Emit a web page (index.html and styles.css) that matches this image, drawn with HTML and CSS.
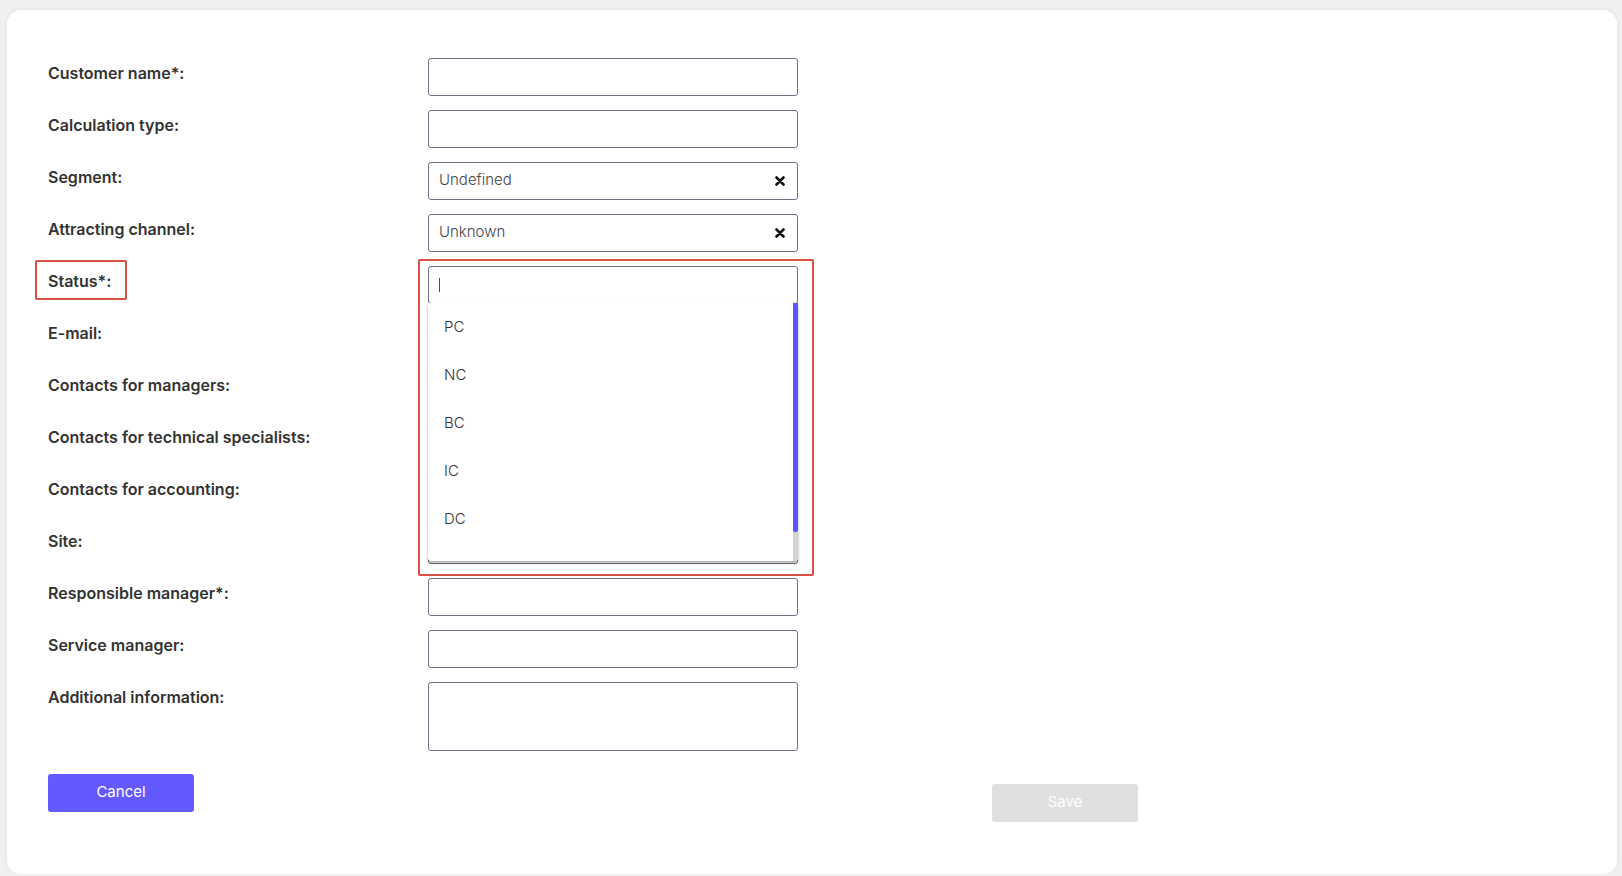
FILE: index.html
```html
<!DOCTYPE html>
<html lang="en">
<head>
    <meta charset="UTF-8">
    <meta name="viewport" content="width=device-width, initial-scale=1.0">
    <title>Customer card</title>
    <link rel="stylesheet" href="styles.css">
</head>
<body>

    <div class="card">
        <form class="customer-form">
            <label class="field-label">Customer name*:</label>
            <div class="input"></div>

            <label class="field-label">Calculation type:</label>
            <div class="input"></div>

            <label class="field-label">Segment:</label>
            <div class="input select">
                <span class="value">Undefined</span>
                <span class="clear">
                    <svg width="10" height="10" viewBox="0 0 10 10"><path d="M1.5 1.5 L8.5 8.5 M8.5 1.5 L1.5 8.5" stroke="#111" stroke-width="2.6" stroke-linecap="round"/></svg>
                </span>
            </div>

            <label class="field-label">Attracting channel:</label>
            <div class="input select">
                <span class="value">Unknown</span>
                <span class="clear">
                    <svg width="10" height="10" viewBox="0 0 10 10"><path d="M1.5 1.5 L8.5 8.5 M8.5 1.5 L1.5 8.5" stroke="#111" stroke-width="2.6" stroke-linecap="round"/></svg>
                </span>
            </div>

            <label class="field-label marked"><span>Status*:</span></label>
            <div class="status-field">
                <div class="input select open">
                    <span class="caret"></span>
                </div>
                <div class="dropdown">
                    <ul class="options">
                        <li>PC</li>
                        <li>NC</li>
                        <li>BC</li>
                        <li>IC</li>
                        <li>DC</li>
                    </ul>
                    <div class="scroll-track">
                        <div class="scroll-thumb"></div>
                    </div>
                </div>
                <div class="mark-box"></div>
            </div>

            <label class="field-label">E-mail:</label>
            <div class="input"></div>

            <label class="field-label">Contacts for managers:</label>
            <div class="input"></div>

            <label class="field-label">Contacts for technical specialists:</label>
            <div class="input"></div>

            <label class="field-label">Contacts for accounting:</label>
            <div class="input"></div>

            <label class="field-label">Site:</label>
            <div class="input"></div>

            <label class="field-label">Responsible manager*:</label>
            <div class="input"></div>

            <label class="field-label">Service manager:</label>
            <div class="input"></div>

            <label class="field-label">Additional information:</label>
            <div class="input textarea"></div>
        </form>

        <div class="actions">
            <button type="button" class="btn-cancel">Cancel</button>
            <button type="button" class="btn-save" disabled>Save</button>
        </div>
    </div>

</body>
</html>
```

FILE: styles.css
```css
body {
    font-family: Inter, "Noto Sans", sans-serif;
    background-color: #f0f0f0;
    margin: 0;
    padding: 10px 5px 0 7px;
    overflow: hidden;
}

.card {
    background-color: #ffffff;
    border-radius: 14px;
    box-shadow: 0px 0px 4px rgba(0, 0, 0, 0.08);
    height: calc(100vh - 12px);
    padding: 48px 41px 0 41px;
    box-sizing: border-box;
}

.customer-form {
    display: grid;
    grid-template-columns: 380px 370px;
    row-gap: 14px;
}

.field-label {
    color: #333;
    font-size: 16px;
    font-weight: 600;
    line-height: 20px;
    padding-top: 5px;
}

.field-label.marked span {
    position: relative;
}

/* red frame round the status label */
.field-label.marked span::after {
    content: "";
    position: absolute;
    left: -13px;
    top: -11px;
    width: 88px;
    height: 36px;
    border: 2px solid #db4f43;
    border-radius: 2px;
}

.input {
    height: 38px;
    border: 1px solid #6f7387;
    border-radius: 3px;
    box-sizing: border-box;
    background-color: #fff;
}

.input.textarea {
    height: 69px;
}

.select {
    display: flex;
    align-items: center;
    justify-content: space-between;
    padding: 0 12px 3px 10px;
}

.select .value {
    color: #444;
    font-size: 15px;
    font-weight: 300;
}

.select .clear {
    display: flex;
    cursor: pointer;
    padding-top: 3px;
}

.status-field {
    position: relative;
}

.select.open {
    padding-bottom: 0;
}

.caret {
    width: 1px;
    height: 14px;
    background-color: #3d3dcc;
}

.dropdown {
    position: absolute;
    top: 37px;
    left: 0;
    width: 370px;
    height: 258px;
    background-color: #fff;
    border-radius: 0 0 3px 3px;
    box-shadow: 0px 2px 3px rgba(0, 0, 0, 0.35);
    overflow: hidden;
    z-index: 2;
}

.options {
    margin: 0;
    padding: 0;
    list-style: none;
}

.options li {
    height: 48px;
    line-height: 48px;
    padding-left: 16px;
    color: #333;
    font-size: 15px;
    font-weight: 300;
}

.scroll-track {
    position: absolute;
    top: 0;
    right: 0;
    bottom: 0;
    width: 5px;
    background-color: #d4d4d4;
}

.scroll-thumb {
    height: 229px;
    background-color: #5b55ff;
    border-radius: 0 0 2px 2px;
}

/* red frame round the open status list */
.mark-box {
    position: absolute;
    left: -10px;
    top: -7px;
    width: 396px;
    height: 317px;
    border: 2px solid #db4f43;
    border-radius: 2px;
    box-sizing: border-box;
    z-index: 3;
    pointer-events: none;
}

.actions {
    display: flex;
    justify-content: space-between;
    align-items: flex-start;
    width: 1090px;
    margin-top: 23px;
}

.actions button {
    width: 146px;
    height: 38px;
    border: none;
    border-radius: 3px;
    color: #fff;
    font-family: Inter, "Noto Sans", sans-serif;
    font-size: 15px;
    font-weight: 400;
    padding: 0 0 4px 0;
}

.btn-cancel {
    background-color: #6359ff;
    cursor: pointer;
}

.btn-save {
    background-color: #e0e0e0;
    margin-top: 10px;
}
```
